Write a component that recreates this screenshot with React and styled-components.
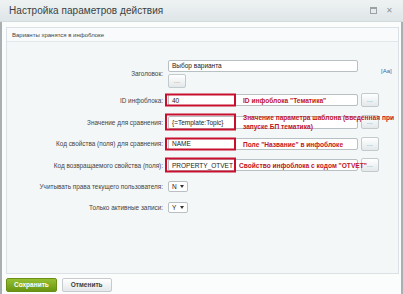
import React from 'react';
import styled, { createGlobalStyle } from 'styled-components';

const GlobalStyle = createGlobalStyle`
  html, body {
    margin: 0;
    padding: 0;
    background: #ffffff;
  }
  body {
    font-family: "Liberation Sans", Arial, sans-serif;
    color: #333;
  }
`;

const Dialog = styled.div`
  width: 403px;
  height: 294px;
  box-sizing: border-box;
  display: flex;
  flex-direction: column;
  background: #fbfcfc;
  overflow: hidden;
`;

const TitleBar = styled.div`
  height: 21px;
  flex: none;
  display: flex;
  align-items: center;
  padding: 0 10px 0 9px;
  background: linear-gradient(#eef2f3, #dfe6e8);
  border-bottom: 1px solid #d3dadd;
`;

const Title = styled.div`
  flex: 1;
  font-size: 10px;
  color: #3b3f42;
  letter-spacing: 0.05px;
`;

const TitleIcons = styled.div`
  display: flex;
  align-items: center;
  gap: 9px;
  color: #8f979b;
  font-size: 8px;
`;

const MaxIcon = styled.span`
  width: 5px;
  height: 4px;
  border: 1px solid #9aa2a6;
  border-top-width: 2px;
`;

const Body = styled.div`
  flex: 1;
  display: flex;
  flex-direction: column;
  border-left: 2px solid #a9b0b3;
  border-right: 2px solid #a9b0b3;
  padding: 5px 2px 0 4px;
`;

const Panel = styled.div`
  height: 245px;
  border: 1px solid #dbe1e4;
  background: #f4f7f8;
  display: flex;
  flex-direction: column;
`;

const PanelHead = styled.div`
  height: 13px;
  display: flex;
  align-items: center;
  padding-left: 5px;
  font-size: 6px;
  color: #444;
  background: #f8fafb;
  border-bottom: 1px solid #e2e7e9;
`;

const Form = styled.div`
  padding-top: 16px;
  display: flex;
  flex-direction: column;
`;

const Row = styled.div`
  display: grid;
  grid-template-columns: 156px 1fr;
  column-gap: 5px;
  align-items: center;
  height: ${(p) => p.h}px;
`;

const Label = styled.div`
  text-align: right;
  font-size: 6.4px;
  color: #444;
  white-space: nowrap;
`;

const Cell = styled.div`
  display: flex;
  align-items: center;
  gap: 3px;
`;

const Stack = styled.div`
  display: flex;
  flex-direction: column;
  gap: 2px;
`;

const Field = styled.div`
  position: relative;
  width: 190px;
  height: ${(p) => p.h || 12}px;
  box-sizing: border-box;
  border: 1px solid #b8c0c3;
  border-radius: 2px;
  background: #fff;
  display: flex;
  align-items: center;
  padding-left: 3px;
  font-size: 6.5px;
  color: #222;
`;

const Select = styled.div`
  width: 20px;
  height: 11px;
  box-sizing: border-box;
  border: 1px solid #b8c0c3;
  border-radius: 2px;
  background: #fff;
  display: flex;
  align-items: center;
  justify-content: space-between;
  padding: 0 3px;
  font-size: 6.5px;
  color: #222;
`;

const Arrow = styled.span`
  width: 0;
  height: 0;
  border-left: 2px solid transparent;
  border-right: 2px solid transparent;
  border-top: 3px solid #333;
`;

const Dots = styled.div`
  width: 18px;
  height: 14px;
  box-sizing: border-box;
  border: 1px solid #c3cacd;
  border-radius: 2px;
  background: linear-gradient(#ffffff, #e3e8ea);
  display: flex;
  align-items: center;
  justify-content: center;
  font-size: 6px;
  color: #555;
  letter-spacing: 0.3px;
`;

const RedBox = styled.div`
  position: absolute;
  left: -4px;
  top: 50%;
  width: 71px;
  height: ${(p) => p.h}px;
  transform: translateY(-50%);
  box-sizing: border-box;
  border: 2px solid #c8102e;
`;

const Note = styled.div`
  position: absolute;
  left: ${(p) => p.left}px;
  top: 50%;
  transform: translateY(-50%);
  font-size: 6.6px;
  line-height: 9px;
  font-weight: bold;
  color: #c0141f;
  white-space: nowrap;
  z-index: 2;
`;

const TagLink = styled.div`
  font-size: 6px;
  color: #2a6cb3;
  margin-left: 20px;
  margin-top: 8px;
  align-self: flex-start;
`;

const Footer = styled.div`
  flex: 1;
  display: flex;
  align-items: center;
  gap: 5px;
  padding-top: 1px;
`;

const Button = styled.div`
  height: 14px;
  box-sizing: border-box;
  padding: 0 ${(p) => (p.primary ? 7 : 8)}px;
  border-radius: 2px;
  display: flex;
  align-items: center;
  font-size: 6.5px;
  font-weight: bold;
  color: ${(p) => (p.primary ? '#fff' : '#3a3f42')};
  background: ${(p) =>
    p.primary
      ? 'linear-gradient(#96c032, #6a9512)'
      : 'linear-gradient(#ffffff, #e4e8ea)'};
  border: 1px solid ${(p) => (p.primary ? '#6a8f14' : '#c6ccce')};
`;

const Mark = ({ boxH, note, left = 74 }) => (
  <>
    <RedBox h={boxH} />
    <Note left={left}>{note}</Note>
  </>
);

export default function App() {
  return (
    <>
      <GlobalStyle />
      <Dialog>
        <TitleBar>
          <Title>Настройка параметров действия</Title>
          <TitleIcons>
            <MaxIcon />
            <span>✕</span>
          </TitleIcons>
        </TitleBar>
        <Body>
          <Panel>
            <PanelHead>Варианты хранятся в инфоблоке</PanelHead>
            <Form>
              <Row h={31}>
                <Label>Заголовок:</Label>
                <Cell>
                  <Stack>
                    <Field>Выбор варианта</Field>
                    <Dots>...</Dots>
                  </Stack>
                  <TagLink>[Аа]</TagLink>
                </Cell>
              </Row>
              <Row h={22}>
                <Label>ID инфоблока:</Label>
                <Cell>
                  <Field>
                    40
                    <Mark boxH={13} note={'ID инфоблока "Тематика"'} />
                  </Field>
                  <Dots>...</Dots>
                </Cell>
              </Row>
              <Row h={22}>
                <Label>Значение для сравнения:</Label>
                <Cell>
                  <Field h={13}>
                    {'{=Template:Topic}'}
                    <Mark
                      boxH={17}
                      note={
                        <>
                          Значение параметра шаблона (введенная при
                          <br />
                          запуске БП тематика)
                        </>
                      }
                    />
                  </Field>
                  <Dots>...</Dots>
                </Cell>
              </Row>
              <Row h={21}>
                <Label>Код свойства (поля) для сравнения:</Label>
                <Cell>
                  <Field>
                    NAME
                    <Mark boxH={13} note={'Поле "Название" в инфоблоке'} />
                  </Field>
                  <Dots>...</Dots>
                </Cell>
              </Row>
              <Row h={22}>
                <Label>Код возвращаемого свойства (поля):</Label>
                <Cell>
                  <Field>
                    PROPERTY_OTVET
                    <Mark boxH={15} left={70} note={'Свойство инфоблока с кодом "OTVET"'} />
                  </Field>
                  <Dots>...</Dots>
                </Cell>
              </Row>
              <Row h={21}>
                <Label>Учитывать права текущего пользователя:</Label>
                <Cell>
                  <Select>
                    N <Arrow />
                  </Select>
                </Cell>
              </Row>
              <Row h={20}>
                <Label>Только активные записи:</Label>
                <Cell>
                  <Select>
                    Y <Arrow />
                  </Select>
                </Cell>
              </Row>
            </Form>
          </Panel>
          <Footer>
            <Button primary>Сохранить</Button>
            <Button>Отменить</Button>
          </Footer>
        </Body>
      </Dialog>
    </>
  );
}
